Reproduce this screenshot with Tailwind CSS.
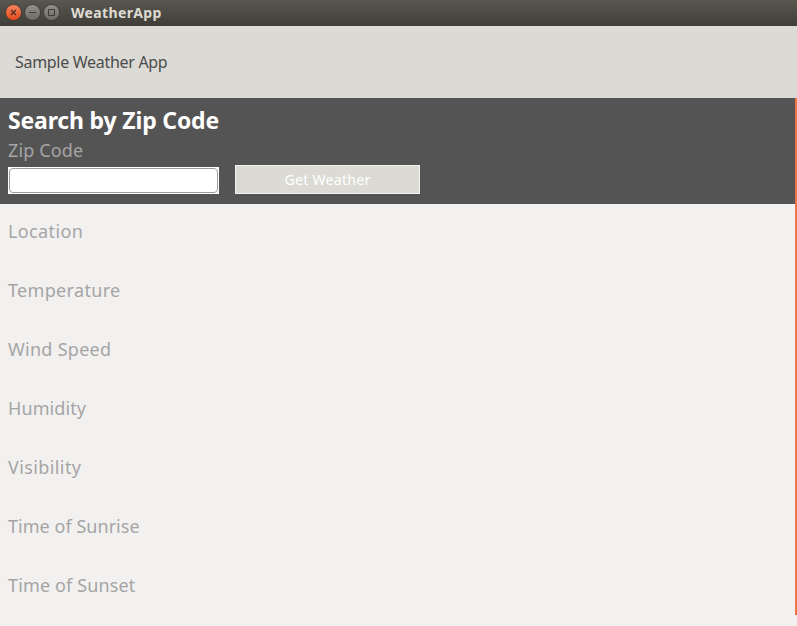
<!DOCTYPE html>
<html lang="en">
<head>
<meta charset="utf-8">
<title>WeatherApp</title>
<script src="https://cdn.jsdelivr.net/npm/@tailwindcss/browser@4"></script>
</head>
<body class="h-[626px] w-[797px] overflow-hidden bg-[#f2f1f0] font-['Noto_Sans',sans-serif]">
<div class="flex h-full flex-col">
  <header class="flex h-[26px] shrink-0 items-center bg-linear-to-b from-[#59574f] to-[#3f3e39] pl-[5px]">
    <svg width="56" height="18" viewBox="0 0 56 18" fill="none" class="shrink-0 -translate-y-[0.5px]">
      <defs>
        <linearGradient id="close" x1="0" y1="0" x2="0" y2="1"><stop stop-color="#f58661"/><stop offset="1" stop-color="#e5491b"/></linearGradient>
        <linearGradient id="gray" x1="0" y1="0" x2="0" y2="1"><stop stop-color="#91908a"/><stop offset="1" stop-color="#6b6a64"/></linearGradient>
      </defs>
      <circle cx="8.5" cy="9" r="8" fill="url(#close)" stroke="#35332e" stroke-width=".8"/>
      <circle cx="27.5" cy="9" r="8" fill="url(#gray)" stroke="#35332e" stroke-width=".8"/>
      <circle cx="46.5" cy="9" r="8" fill="url(#gray)" stroke="#35332e" stroke-width=".8"/>
      <path d="M6 6.5l5 5M11 6.5l-5 5" stroke="#4c2b20" stroke-width="1.2"/>
      <path d="M24 9h7" stroke="#3c3b37"/>
      <path d="M43.5 6h6v6h-6z" stroke="#3c3b37"/>
    </svg>
    <h1 class="ml-[10px] text-[14px] leading-[26px] font-bold tracking-[0.35px] whitespace-nowrap text-[#dfdbd2]">WeatherApp</h1>
  </header>
  <div class="flex h-[72px] shrink-0 items-center bg-[#dbdad5] pl-[15px] text-[16px] tracking-[-0.3px] whitespace-nowrap text-[#4c4c4c]">Sample Weather App</div>
  <div class="flex h-[517px] shrink-0 flex-col border-r-2 border-[#ee7649]">
    <section class="h-[106px] shrink-0 bg-[#545454] pt-[6px] pl-2">
      <h2 class="text-[23px] leading-8 font-bold tracking-[-0.17px] whitespace-nowrap text-white">Search by Zip Code</h2>
      <label for="zip" class="block h-[31px] text-[18px] leading-7 tracking-[0.14px] whitespace-nowrap text-[#a5a5a5]">Zip Code</label>
      <div class="flex items-start gap-4">
        <div class="h-[27px] w-[211px] bg-white p-px"><input id="zip" class="block h-[25px] w-[209px] rounded-[4px] border border-[#9e9c9a] bg-white px-1 outline-none"></div>
        <button class="-mt-[2px] flex h-[29px] w-[185px] items-center justify-center border border-[#f2f1f0] bg-[#dbdad5] text-[14px] tracking-[0.3px] whitespace-nowrap text-white">Get Weather</button>
      </div>
    </section>
    <dl class="pt-[12px] pl-2 text-[18px] leading-[30px] whitespace-nowrap text-[#a5a5a5]">
      <dt class="h-[59px] tracking-[0.37px]">Location</dt>
      <dt class="h-[59px] tracking-[0.33px]">Temperature</dt>
      <dt class="h-[59px] tracking-[0.28px]">Wind Speed</dt>
      <dt class="h-[59px] tracking-[0.1px]">Humidity</dt>
      <dt class="h-[59px] tracking-[0.4px]">Visibility</dt>
      <dt class="h-[59px] tracking-[0.04px]">Time of Sunrise</dt>
      <dt class="h-[59px] tracking-[0.14px]">Time of Sunset</dt>
    </dl>
  </div>
</div>
</body>
</html>
